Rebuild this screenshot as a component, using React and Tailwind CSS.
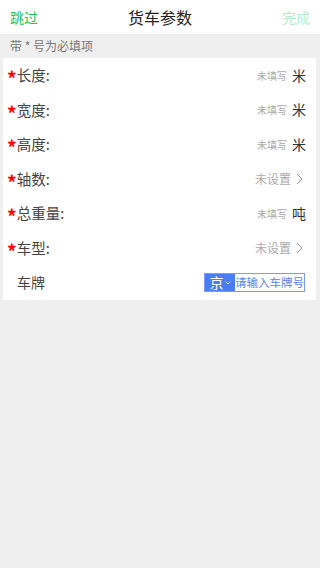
import React from "react";

const rows = [
  { label: "长度:", type: "input", unit: "米" },
  { label: "宽度:", type: "input", unit: "米" },
  { label: "高度:", type: "input", unit: "米" },
  { label: "轴数:", type: "select" },
  { label: "总重量:", type: "input", unit: "吨" },
  { label: "车型:", type: "select" },
];

const Chevron = () => (
  <svg width="7" height="12" viewBox="0 0 7 12" className="ml-[5px]">
    <path d="M1 1l5 5-5 5" fill="none" stroke="#999" strokeWidth="1" />
  </svg>
);

const App = () => {
  return (
    <div
      className="w-[320px] h-[568px] bg-[#efefef] flex flex-col"
      style={{ fontFamily: '"Noto Sans CJK SC", "Noto Sans", sans-serif' }}
    >
      <div className="h-[34px] bg-white flex items-center justify-between px-[10px]">
        <span className="text-[14px] text-[#27c156]">跳过</span>
        <span className="text-[16px] text-[#222]">货车参数</span>
        <span className="text-[14px] text-[#b8ecc8]">完成</span>
      </div>
      <div className="h-[24px] flex items-center px-[10px] text-[12px] text-[#777]">
        带 * 号为必填项
      </div>
      <div className="ml-[3px] mr-[4px] bg-white">
        {rows.map((r) => (
          <div key={r.label} className="h-[34.5px] flex items-center justify-between pl-[4px] pr-[10px]">
            <div className="flex items-center text-[14.5px] text-[#444]">
              <span className="text-[#f00] text-[19px] font-bold leading-none mt-[5px]">*</span>
              <span>{r.label}</span>
            </div>
            {r.type === "input" ? (
              <div className="flex items-center">
                <span className="text-[10px] text-[#aaa]">未填写</span>
                <span className="text-[14px] text-[#333] ml-[5px]">{r.unit}</span>
              </div>
            ) : (
              <div className="flex items-center text-[12px] text-[#aaa] mr-[3px]">
                <span>未设置</span>
                <Chevron />
              </div>
            )}
          </div>
        ))}
        <div className="h-[35px] flex items-center justify-between pl-[14px] pr-[11px]">
          <span className="text-[14px] text-[#444]">车牌</span>
          <div className="flex items-stretch h-[19px] border border-[#7c9cf4]">
            <div className="w-[30px] bg-[#4a7cf6] flex items-center justify-center text-white text-[14px]">
              京
              <svg width="6" height="4" viewBox="0 0 6 4" className="ml-[1px]">
                <path d="M0.5 0.5l2.5 2.5 2.5-2.5" fill="none" stroke="#fff" strokeWidth="0.8" />
              </svg>
            </div>
            <div className="flex items-center text-[11.5px] text-[#5b7ff2] leading-none">
              请输入车牌号
            </div>
          </div>
        </div>
      </div>
    </div>
  );
};

export default App;
